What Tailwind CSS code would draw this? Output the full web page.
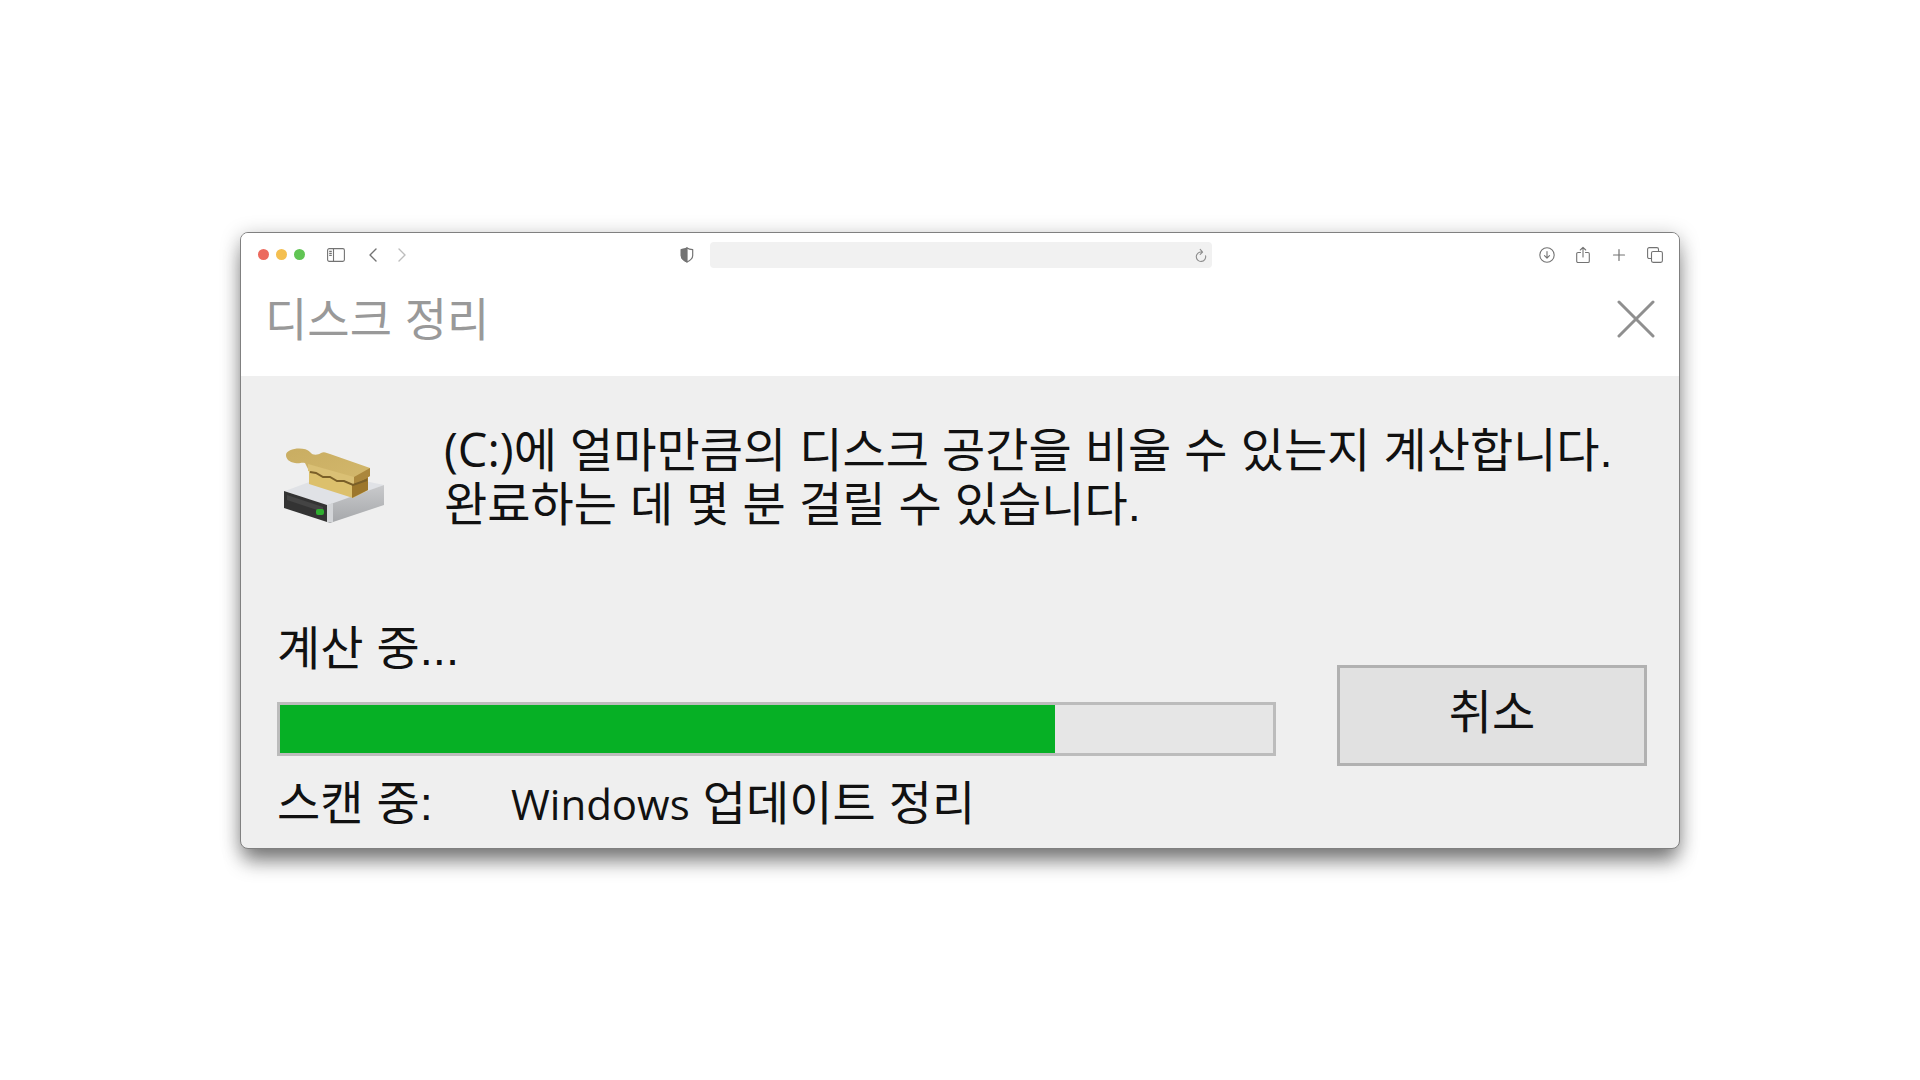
<!DOCTYPE html>
<html lang="ko">

<head>
  <meta charset="UTF-8">
  <meta name="viewport" content="width=device-width, initial-scale=1.0">
  <title>디스크 정리</title>
  <script src="https://cdn.jsdelivr.net/npm/@tailwindcss/browser@4"></script>
</head>

<body class="bg-white min-h-screen flex items-center justify-center font-['Liberation_Sans','Noto_Sans_CJK_KR',sans-serif]">
  <div class="w-3/4 rounded-lg border border-[#808080] bg-[#efefef] overflow-hidden shadow-[0_16px_20px_-4px_rgba(0,0,0,0.42),0_4px_20px_rgba(0,0,0,0.28)]">

    <!-- Browser toolbar -->
    <header class="bg-white h-11 pl-[17px] pr-4 grid grid-cols-[1fr_502px_1fr] items-center text-[#737373]">
      <div class="flex items-center">
        <div class="flex gap-[7px] mr-[22px]">
          <button aria-label="Close window" class="size-[11px] rounded-full bg-[#ec6a5e]"></button>
          <button aria-label="Minimize window" class="size-[11px] rounded-full bg-[#f4bf50]"></button>
          <button aria-label="Zoom window" class="size-[11px] rounded-full bg-[#61c554]"></button>
        </div>
        <button aria-label="Sidebar" class="mr-6">
          <svg class="w-[18px] h-[14px]" viewBox="0 0 18 14" fill="none" stroke="currentColor" stroke-width="1.1">
            <rect x=".6" y=".6" width="16.8" height="12.8" rx="1.6" />
            <path d="M6.5 .6V13.4M2.2 3.4H4.8M2.2 5.4H4.8M2.2 7.4H4.8" />
          </svg>
        </button>
        <button aria-label="Back" class="mr-[21px]">
          <svg class="w-2 h-[14px]" viewBox="0 0 8 14" fill="none" stroke="currentColor" stroke-width="1.4" stroke-linecap="round" stroke-linejoin="round">
            <path d="M7 1L1 7L7 13" />
          </svg>
        </button>
        <button aria-label="Forward" class="text-[#bdbdbd]">
          <svg class="w-2 h-[14px]" viewBox="0 0 8 14" fill="none" stroke="currentColor" stroke-width="1.4" stroke-linecap="round" stroke-linejoin="round">
            <path d="M1 1L7 7L1 13" />
          </svg>
        </button>
        <button aria-label="Privacy report" class="ml-auto mr-4">
          <svg class="w-[14px] h-4" viewBox="0 0 14 16" fill="none" stroke="currentColor" stroke-width="1.2" stroke-linejoin="round">
            <path d="M7 .9C5.5 2 3.5 2.5 1.3 2.6V8.5C1.3 11.5 4 13.6 7 15C10 13.6 12.7 11.5 12.7 8.5V2.6C10.5 2.5 8.5 2 7 .9Z" />
            <path d="M7 .9C5.5 2 3.5 2.5 1.3 2.6V8.5C1.3 11.5 4 13.6 7 15Z" fill="currentColor" />
          </svg>
        </button>
      </div>

      <div class="flex items-center h-[26px] rounded bg-[#f1f1f1] pr-[5px]">
        <input type="text" aria-label="Address" class="flex-1 min-w-0 h-full px-2 text-sm bg-transparent outline-none">
        <button aria-label="Reload" class="text-[#8c8c8c]">
          <svg class="w-3 h-[14px]" viewBox="0 0 12 14" fill="none" stroke="currentColor" stroke-width="1.1" stroke-linecap="round" stroke-linejoin="round">
            <path d="M10.6 7.8A4.7 4.7 0 1 1 6.8 4.1M5.2 1.4L7.6 4.1L5.2 6.4" />
          </svg>
        </button>
      </div>

      <div class="flex items-center justify-end gap-5">
        <button aria-label="Downloads">
          <svg class="size-4" viewBox="0 0 16 16" fill="none" stroke="currentColor" stroke-width="1.1" stroke-linecap="round" stroke-linejoin="round">
            <circle cx="8" cy="8" r="7.2" />
            <path d="M8 4.5V11M5.5 8.7L8 11.2L10.5 8.7" />
          </svg>
        </button>
        <button aria-label="Share">
          <svg class="w-4 h-[18px]" viewBox="0 0 16 18" fill="none" stroke="currentColor" stroke-width="1.1" stroke-linecap="round" stroke-linejoin="round">
            <path d="M5.5 6.5H3A1.3 1.3 0 0 0 1.7 7.8V15.2A1.3 1.3 0 0 0 3 16.5H13A1.3 1.3 0 0 0 14.3 15.2V7.8A1.3 1.3 0 0 0 13 6.5H10.5M8 11V1.5M5.3 4L8 1.3L10.7 4" />
          </svg>
        </button>
        <button aria-label="New tab">
          <svg class="size-4" viewBox="0 0 16 16" fill="none" stroke="currentColor" stroke-width="1.2" stroke-linecap="round">
            <path d="M8 2.5V13.5M2.5 8H13.5" />
          </svg>
        </button>
        <button aria-label="Tab overview">
          <svg class="size-4" viewBox="0 0 16 16" fill="none" stroke="currentColor" stroke-width="1.1" stroke-linejoin="round">
            <rect x="4.5" y="4.5" width="10.9" height="10.9" rx="1.6" />
            <path d="M4.5 11.5H2.2A1.6 1.6 0 0 1 .6 9.9V2.2A1.6 1.6 0 0 1 2.2 .6H9.9A1.6 1.6 0 0 1 11.5 2.2V4.5" />
          </svg>
        </button>
      </div>
    </header>

    <!-- Dialog title bar -->
    <div class="bg-white flex items-start justify-between px-6 pt-4 pb-[29px]">
      <h1 class="text-[46px] leading-[54px] text-[#999999]">디스크 정리</h1>
      <button aria-label="닫기" class="text-[#8f8f8f] mt-[7px]">
        <svg class="size-[38px]" viewBox="0 0 38 38" fill="none" stroke="currentColor" stroke-width="3" stroke-linecap="round">
          <path d="M2 2L36 36M36 2L2 36" />
        </svg>
      </button>
    </div>

    <main class="pl-9 pr-8 pt-[46px] pb-[17px] text-[47px] leading-[54px] text-[#111111]">
      <div class="flex items-start">
        <svg class="w-[112px] h-[84px] mt-[23px] mr-[55px] shrink-0" viewBox="0 0 112 84">
          <defs>
            <linearGradient id="side" x1="0" y1="0" x2="0" y2="1">
              <stop offset="0" stop-color="#c9cacc" />
              <stop offset="1" stop-color="#a5a7aa" />
            </linearGradient>
            <linearGradient id="lid" x1="0" y1="0" x2="1" y2="1">
              <stop offset="0" stop-color="#c9ad62" />
              <stop offset="1" stop-color="#d3b86c" />
            </linearGradient>
          </defs>
          <!-- drive -->
          <path d="M8 46L54 29L107 40L51 61Z" fill="#e0e2e6" />
          <path d="M51 60L107 40V60L53 78L50 77Z" fill="url(#side)" />
          <path d="M50 60L56 58V77L50 77Z" fill="#d3d5d8" />
          <path d="M7 46L50 60V77L7 63Z" fill="#333333" />
          <path d="M10 50L46 62V67L10 55Z" fill="#444444" />
          <rect x="39" y="64" width="8" height="6" rx="2" fill="#2fae2f" />
          <!-- brush -->
          <path d="M32 22L76 36L91 28V45L76 53L32 39Z" fill="#dcc06c" />
          <path d="M75 37L91 28V45L75 53Z" fill="#9c762b" />
          <path d="M9 10C9 3 28 1 33 7C36 11 41 10 44 8C47 6 50 8 53 9L93 23V31L77 39L32 26L28 18C24 17 23 19 18 18C12 17 9 14 9 10Z" fill="url(#lid)" />
          <path d="M31 19L77 32V40L31 26Z" fill="#dac075" />
          <path d="M77 32L93 23V31L77 40Z" fill="#ab873c" />
          <path d="M33 27L39 28L46 32L53 32L60 36L67 36L76 40L90 35" fill="none" stroke="#7a5f28" stroke-width="2" />
        </svg>
        <p><span class="font-['Open_Sans']">(C:)</span>에 얼마만큼의 디스크 공간을 비울 수 있는지 계산합니다.<br>완료하는 데 몇 분 걸릴 수 있습니다.</p>
      </div>

      <div class="flex items-start gap-[61px] mt-[90px]">
        <div class="flex-1 min-w-0">
          <p id="progress-label">계산 중...</p>
          <div role="progressbar" aria-labelledby="progress-label" aria-valuemin="0" aria-valuemax="100" aria-valuenow="78"
            class="h-[54px] mt-[26px] mb-[21px] border-3 border-[#bcbcbc] bg-[#e6e6e6]">
            <div class="h-full bg-[#06b025]" style="width: 78%"></div>
          </div>
          <div class="flex">
            <span class="w-[234px]">스캔 중:</span>
            <span><span class="font-['Open_Sans'] text-[42px]">Windows</span> 업데이트 정리</span>
          </div>
        </div>
        <button class="w-[310px] h-[101px] mt-[43px] pb-1 border-3 border-[#b1b1b1] bg-[#e1e1e1]">취소</button>
      </div>
    </main>
  </div>
</body>

</html>
